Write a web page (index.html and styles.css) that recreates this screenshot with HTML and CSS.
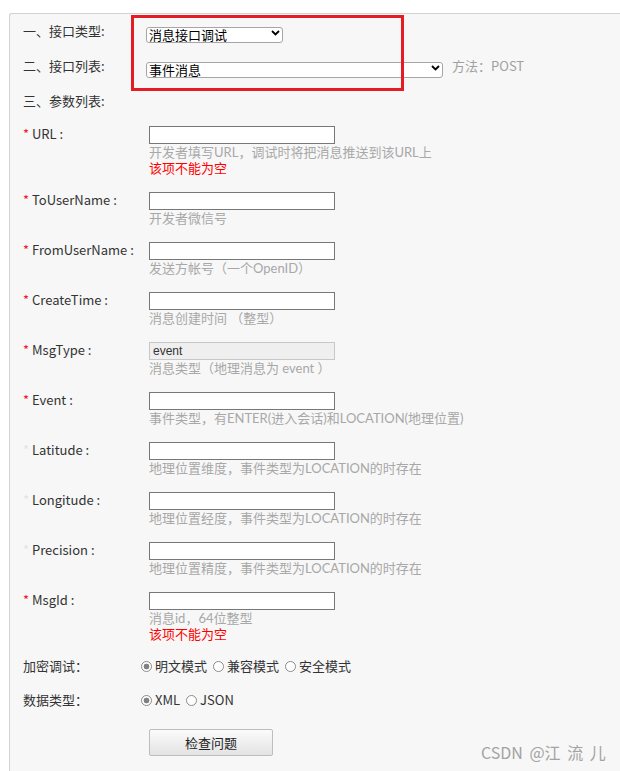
FILE: index.html
```html
<!DOCTYPE html>
<html lang="zh-CN">
<head>
<meta charset="utf-8">
<title>消息接口调试</title>
<link rel="stylesheet" href="styles.css">
</head>
<body>
<div class="panel">
  <div class="top-row">
    <span class="top-label">一、接口类型:</span>
    <div class="select-wrap w1">
      <select class="sel"><option>消息接口调试</option></select>
      <svg class="chev" width="9" height="6" viewBox="0 0 9 6"><path d="M1 1 L4.5 4.5 L8 1" fill="none" stroke="#000" stroke-width="1.8"/></svg>
    </div>
  </div>
  <div class="top-row">
    <span class="top-label">二、接口列表:</span>
    <div class="select-wrap w2">
      <select class="sel"><option>事件消息</option></select>
      <svg class="chev" width="9" height="6" viewBox="0 0 9 6"><path d="M1 1 L4.5 4.5 L8 1" fill="none" stroke="#000" stroke-width="1.8"/></svg>
    </div>
    <span class="method">方法：POST</span>
  </div>
  <div class="top-row last">
    <span class="top-label">三、参数列表:</span>
  </div>

  <div class="params">
    <div class="param">
      <label class="plabel"><span class="star">*</span> URL :</label>
      <div class="field">
        <input class="inp" type="text">
        <div class="hint">开发者填写URL，调试时将把消息推送到该URL上</div>
        <div class="err">该项不能为空</div>
      </div>
    </div>
    <div class="param">
      <label class="plabel"><span class="star">*</span> ToUserName :</label>
      <div class="field">
        <input class="inp" type="text">
        <div class="hint">开发者微信号</div>
      </div>
    </div>
    <div class="param">
      <label class="plabel"><span class="star">*</span> FromUserName :</label>
      <div class="field">
        <input class="inp" type="text">
        <div class="hint">发送方帐号（一个OpenID）</div>
      </div>
    </div>
    <div class="param">
      <label class="plabel"><span class="star">*</span> CreateTime :</label>
      <div class="field">
        <input class="inp" type="text">
        <div class="hint">消息创建时间 （整型）</div>
      </div>
    </div>
    <div class="param">
      <label class="plabel"><span class="star">*</span> MsgType :</label>
      <div class="field">
        <input class="inp disabled" type="text" value="event" disabled>
        <div class="hint">消息类型（地理消息为 event ）</div>
      </div>
    </div>
    <div class="param">
      <label class="plabel"><span class="star">*</span> Event :</label>
      <div class="field">
        <input class="inp" type="text">
        <div class="hint">事件类型，有ENTER(进入会话)和LOCATION(地理位置)</div>
      </div>
    </div>
    <div class="param">
      <label class="plabel"><span class="star faint">*</span> Latitude :</label>
      <div class="field">
        <input class="inp" type="text">
        <div class="hint">地理位置维度，事件类型为LOCATION的时存在</div>
      </div>
    </div>
    <div class="param">
      <label class="plabel"><span class="star faint">*</span> Longitude :</label>
      <div class="field">
        <input class="inp" type="text">
        <div class="hint">地理位置经度，事件类型为LOCATION的时存在</div>
      </div>
    </div>
    <div class="param">
      <label class="plabel"><span class="star faint">*</span> Precision :</label>
      <div class="field">
        <input class="inp" type="text">
        <div class="hint">地理位置精度，事件类型为LOCATION的时存在</div>
      </div>
    </div>
    <div class="param">
      <label class="plabel"><span class="star">*</span> MsgId :</label>
      <div class="field">
        <input class="inp" type="text">
        <div class="hint">消息id，64位整型</div>
        <div class="err">该项不能为空</div>
      </div>
    </div>
  </div>

  <div class="opt-row">
    <span class="olabel">加密调试：</span>
    <div class="radios">
      <label class="radio"><input type="radio" name="enc" checked>明文模式</label>
      <label class="radio"><input type="radio" name="enc">兼容模式</label>
      <label class="radio"><input type="radio" name="enc">安全模式</label>
    </div>
  </div>
  <div class="opt-row">
    <span class="olabel">数据类型：</span>
    <div class="radios">
      <label class="radio"><input type="radio" name="fmt" checked>XML</label>
      <label class="radio"><input type="radio" name="fmt">JSON</label>
    </div>
  </div>
  <div class="btn-row">
    <button class="btn" type="button">检查问题</button>
  </div>
</div>
<div class="redbox"></div>
<div class="watermark">CSDN @江 流 儿</div>
</body>
</html>
```

FILE: styles.css
```css
html, body {
  margin: 0;
  padding: 0;
  background: #fff;
  height: 771px;
  overflow: hidden;
}
body {
  position: relative;
  font-family: "Noto Sans CJK SC", "Noto Sans", "Liberation Sans", sans-serif;
  font-size: 13px;
  color: #333;
}
.panel {
  margin: 13px 0 0 9px;
  border: 1px solid #d2d2d2;
  border-right: none;
  border-radius: 3px 0 0 0;
  background: #f7f7f7;
  padding: 10px 0 60px 13px;
  min-height: 760px;
}
.top-row {
  display: flex;
  align-items: center;
  height: 18px;
  margin-bottom: 17px;
}
.top-row.last {
  margin-bottom: 14px;
}
.top-label {
  width: 123px;
  line-height: 18px;
  margin-bottom: 4px;
}
.select-wrap {
  position: relative;
  height: 16px;
}
.select-wrap.w1 { width: 137px; }
.select-wrap.w2 { width: 297px; }
.sel {
  appearance: none;
  -webkit-appearance: none;
  box-sizing: border-box;
  width: 100%;
  height: 16px;
  margin: 0;
  padding: 0 14px 0 2px;
  border: 1px solid #a6a6a6;
  border-radius: 3px;
  background: #fff;
  color: #000;
  font-family: inherit;
  font-size: 13px;
  line-height: 14px;
}
.chev {
  position: absolute;
  right: 3px;
  top: 5px;
}
.method {
  margin-left: 9px;
  margin-bottom: 4px;
  color: #a0a0a0;
  line-height: 18px;
}
.param {
  display: flex;
  margin-bottom: 16px;
}
.param:last-child {
  margin-bottom: 15px;
}
.plabel {
  width: 126px;
  height: 17px;
  line-height: 16px;
  color: #333;
  white-space: nowrap;
}
.star {
  color: #f0161e;
}
.star.faint {
  color: #e4e4e4;
}
.field {
  display: flex;
  flex-direction: column;
  align-items: flex-start;
}
.inp {
  box-sizing: border-box;
  width: 186px;
  height: 18px;
  margin: 0;
  padding: 0 3px;
  border: 1px solid #777;
  background: #fff;
  font-family: "Liberation Sans", sans-serif;
  font-size: 12px;
  color: #333;
  outline: none;
}
.inp.disabled {
  background: #efefef;
  border-color: #c8c8c8;
  color: #333;
}
.hint,
.err {
  font-family: "Lato", "Noto Sans CJK SC", sans-serif;
  line-height: 16px;
}
.hint {
  color: #a8a8a8;
  white-space: nowrap;
}
.err {
  color: #f00;
}
.opt-row {
  display: flex;
  align-items: center;
  height: 18px;
  margin-bottom: 16px;
}
.olabel {
  width: 118px;
  line-height: 18px;
}
.radios {
  display: flex;
  align-items: center;
  gap: 6px;
}
.radio {
  display: flex;
  align-items: center;
  color: #333;
  line-height: 18px;
}
.radio input {
  appearance: none;
  -webkit-appearance: none;
  box-sizing: border-box;
  width: 11px;
  height: 11px;
  margin: 0 3px 0 0;
  border: 1px solid #8c8c8c;
  border-radius: 50%;
  background: #fff;
}
.radio input:checked {
  background: radial-gradient(circle, #808080 0, #808080 2.6px, #fff 3.2px);
}
.btn-row {
  padding-left: 126px;
  margin-top: 20px;
}
.btn {
  box-sizing: border-box;
  width: 124px;
  height: 27px;
  margin: 0;
  border: 1px solid #bdbdbd;
  border-radius: 2px;
  background: linear-gradient(#fbfbfb, #e3e3e3);
  font-family: inherit;
  font-size: 13px;
  color: #222;
}
.redbox {
  position: absolute;
  left: 131px;
  top: 15px;
  width: 273px;
  height: 76px;
  box-sizing: border-box;
  border: 3px solid #e41c24;
}
.watermark {
  position: absolute;
  left: 481px;
  top: 742px;
  font-family: "Noto Sans CJK SC", "Noto Sans", sans-serif;
  font-size: 16px;
  line-height: 20px;
  word-spacing: 3px;
  color: #a3a3a3;
  white-space: nowrap;
}
```
